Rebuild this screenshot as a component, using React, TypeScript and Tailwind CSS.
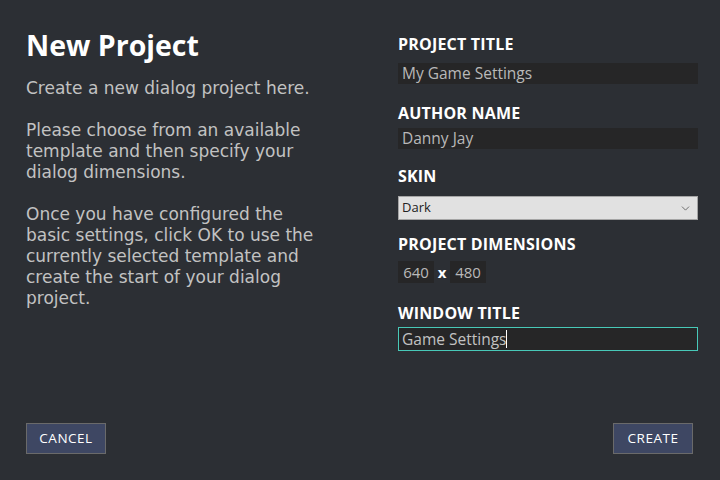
import { ChevronDown } from 'lucide-react';

export default function App() {
  const font = { fontFamily: '"Open Sans", "Liberation Sans", sans-serif' };
  const body = { fontFamily: '"DejaVu Sans", "Open Sans", sans-serif' };
  return (
    <div className="w-[720px] h-[480px] bg-[#2c2f34] flex flex-col" style={font}>
      <div className="flex flex-1">
        {/* Left description */}
        <div className="w-[398px] pl-[26px] pt-[28px]">
          <h1 className="text-[28.5px] leading-[34px] font-bold text-white">New Project</h1>
          <div className="mt-[16px] text-[17px] leading-[21px] text-[#c2c2c2] flex flex-col gap-[21px]" style={body}>
            <p>Create a new dialog project here.</p>
            <p>
              Please choose from an available<br />
              template and then specify your<br />
              dialog dimensions.
            </p>
            <p>
              Once you have configured the<br />
              basic settings, click OK to use the<br />
              currently selected template and<br />
              create the start of your dialog<br />
              project.
            </p>
          </div>
        </div>

        {/* Right form */}
        <div className="w-[300px] pt-[34px] flex flex-col">
          <label className="text-[16px] leading-[20px] font-bold tracking-[0.2px] text-white">PROJECT TITLE</label>
          <div className="mt-[9px] h-[21px] bg-[#262627] px-[4px] text-[15.5px] leading-[21px] text-[#b9b9b9]">
            My Game Settings
          </div>

          <label className="mt-[19px] text-[16px] leading-[20px] font-bold tracking-[0.2px] text-white">AUTHOR NAME</label>
          <div className="mt-[5px] h-[21px] bg-[#262627] px-[4px] text-[15.5px] leading-[21px] text-[#b9b9b9]">
            Danny Jay
          </div>

          <label className="mt-[17px] text-[16px] leading-[20px] font-bold tracking-[0.2px] text-white">SKIN</label>
          <div className="mt-[10px] h-[24px] bg-[#e1e1e1] border border-[#a5a5a5] flex items-center justify-between pl-[3px] pr-[5px] text-[13px] text-[#222]">
            <span>Dark</span>
            <ChevronDown className="size-[13px] text-[#555]" strokeWidth={1.5} />
          </div>

          <label className="mt-[14px] text-[16px] leading-[20px] font-bold tracking-[0.2px] text-white">PROJECT DIMENSIONS</label>
          <div className="mt-[7px] flex items-center">
            <div className="w-[36px] h-[22px] bg-[#262627] text-[15px] leading-[22px] text-[#b9b9b9] text-center">640</div>
            <span className="w-[16px] text-center text-[15px] font-bold text-white">x</span>
            <div className="w-[36px] h-[22px] bg-[#262627] text-[15px] leading-[22px] text-[#b9b9b9] text-center">480</div>
          </div>

          <label className="mt-[19px] text-[16px] leading-[20px] font-bold tracking-[0.2px] text-white">WINDOW TITLE</label>
          <div className="mt-[4px] h-[24px] bg-[#262627] border border-[#48c9b8] px-[3px] text-[15.5px] leading-[22px] text-[#c2c2c2] flex items-center">
            Game Settings<span className="w-px h-[18px] bg-white" />
          </div>
        </div>
      </div>

      {/* Footer buttons */}
      <div className="flex justify-between pl-[26px] pr-[27px] pb-[26px]">
        <button className="w-[80px] h-[31px] bg-[#3e4763] border border-[#6a6a6a] text-[13.5px] tracking-[0.5px] text-white">CANCEL</button>
        <button className="w-[80px] h-[31px] bg-[#3e4763] border border-[#6a6a6a] text-[13.5px] tracking-[0.5px] text-white">CREATE</button>
      </div>
    </div>
  );
}
